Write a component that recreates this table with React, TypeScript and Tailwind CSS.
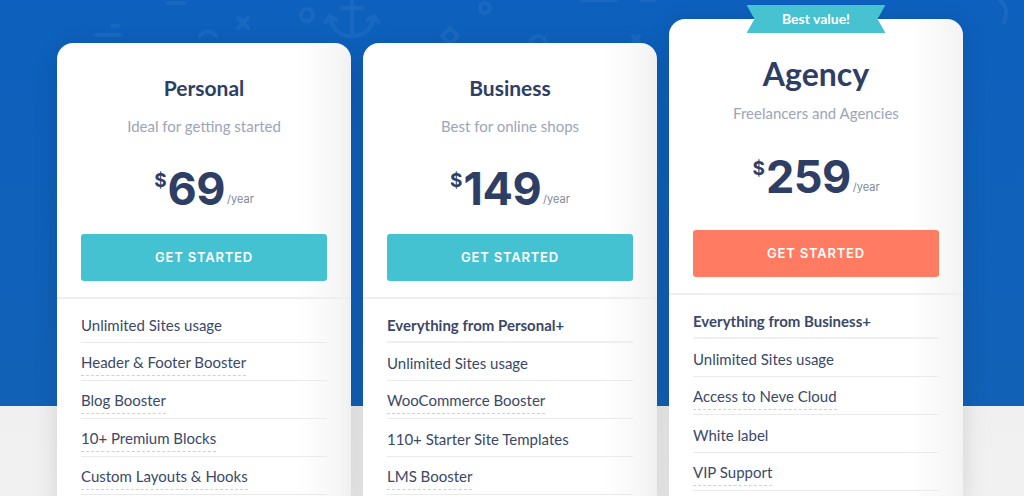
import { ReactNode } from 'react';

type Feature = { label: string; bold?: boolean; dashed?: boolean };

type Plan = {
  name: string;
  tagline: string;
  price: string;
  featured?: boolean;
  features: Feature[];
};

const plans: Plan[] = [
  {
    name: 'Personal',
    tagline: 'Ideal for getting started',
    price: '69',
    features: [
      { label: 'Unlimited Sites usage' },
      { label: 'Header & Footer Booster', dashed: true },
      { label: 'Blog Booster', dashed: true },
      { label: '10+ Premium Blocks', dashed: true },
      { label: 'Custom Layouts & Hooks', dashed: true },
    ],
  },
  {
    name: 'Business',
    tagline: 'Best for online shops',
    price: '149',
    features: [
      { label: 'Everything from Personal+', bold: true },
      { label: 'Unlimited Sites usage' },
      { label: 'WooCommerce Booster', dashed: true },
      { label: '110+ Starter Site Templates' },
      { label: 'LMS Booster', dashed: true },
    ],
  },
  {
    name: 'Agency',
    tagline: 'Freelancers and Agencies',
    price: '259',
    featured: true,
    features: [
      { label: 'Everything from Business+', bold: true },
      { label: 'Unlimited Sites usage' },
      { label: 'Access to Neve Cloud', dashed: true },
      { label: 'White label' },
      { label: 'VIP Support', dashed: true },
    ],
  },
];

// faint doodles sitting in the blue band
const Doodles = () => (
  <svg
    className="absolute left-0 top-0 pointer-events-none"
    width="1024"
    height="60"
    viewBox="0 0 1024 60"
    fill="none"
    stroke="#4a88d4"
    strokeWidth="4"
    strokeLinecap="round"
    opacity="0.2"
  >
    <path d="M112 26h6M95 35h25" />
    <path d="M168 3h16" />
    <circle cx="307" cy="15" r="6" />
    <path d="M238 18l10 10M248 18l-10 10" />
    <path d="M352 -2v38M362 8h-20M350 36c-10 0-18-8-20-18M354 36c10 0 18-8 20-18M326 22l4-6 6 4M378 22l-4-6-6 4" />
    <circle cx="485" cy="8" r="5" />
    <path d="M450 28l8 8-8 8-8-8z" />
    <path d="M530 44a8 8 0 0 1 16 0" />
    <path d="M582 0h34M642 0h12" />
    <path d="M633 36l6 6M639 36l-6 6" />
    <path d="M200 36c4-6 12-6 16 0" />
    <path d="M1000 0c6 6 8 14 4 22" />
  </svg>
);

const Ribbon = () => (
  <div className="absolute left-1/2 top-[-14px] -translate-x-1/2 w-[139px] h-[28px] bg-[#46c2d0] [clip-path:polygon(0_0,100%_0,calc(100%-8px)_50%,100%_100%,0_100%,8px_50%)] flex items-center justify-center">
    <span className="text-white font-bold text-[14px] leading-none font-['Lato',sans-serif]">Best value!</span>
  </div>
);

const FeatureRow = ({ feature }: { feature: Feature }) => {
  let text: ReactNode = feature.label;
  if (feature.dashed) {
    text = <span className="border-b border-dashed border-[#cdd1da] pb-[1px]">{feature.label}</span>;
  }
  return (
    <li
      className={`h-[38px] pt-[4px] flex items-center border-b border-[#e9eaec] text-[15px] text-[#3b4868] ${
        feature.bold ? 'font-bold border-b-2 border-[#efefef]' : ''
      }`}
    >
      {text}
    </li>
  );
};

const PlanCard = ({ plan }: { plan: Plan }) => {
  const f = plan.featured;
  return (
    <div
      className={`relative w-[294px] shrink-0 rounded-[16px] bg-[linear-gradient(90deg,#ffffff_82%,#f3f3f3)] shadow-[0_4px_24px_rgba(0,0,0,0.12)] font-['Lato',sans-serif] ${
        f ? 'mt-[19px]' : 'mt-[43px]'
      }`}
    >
      {f && <Ribbon />}
      <div className={`px-[24px] flex flex-col items-center ${f ? 'pt-[34px]' : 'pt-[31px]'}`}>
        <h3
          className={`font-bold text-[#2f3e64] ${
            f ? 'text-[32px] leading-[42px]' : 'text-[21px] leading-[28px]'
          }`}
        >
          {plan.name}
        </h3>
        <p className={`text-[15px] leading-[20px] text-[#9da5b7] ${f ? 'mt-[8px]' : 'mt-[14px]'}`}>
          {plan.tagline}
        </p>
        <div className={`flex items-start font-['Inter',sans-serif] text-[#2f3e64] ${f ? 'mt-[31px]' : 'mt-[30px]'}`}>
          <span className="text-[19px] font-bold leading-none mt-[5px] mr-[1px]">$</span>
          <span className="text-[45px] font-bold leading-none tracking-[-0.5px]">{plan.price}</span>
          <span className="text-[11px] text-[#7f889b] mt-[28px] ml-[2px] leading-none">/year</span>
        </div>
        <button
          className={`w-full h-[47px] rounded-[3px] text-white text-[13px] font-semibold tracking-[0.8px] font-['Inter',sans-serif] ${
            f ? 'mt-[31px] bg-[#ff7b61]' : 'mt-[23px] bg-[#45c2d1]'
          }`}
        >
          GET STARTED
        </button>
      </div>
      <div className="mt-[16px] h-[2px] bg-[#efefef]" />
      <ul className="px-[24px] pt-[6px] pb-[24px]">
        {plan.features.map((feature) => (
          <FeatureRow key={feature.label} feature={feature} />
        ))}
      </ul>
    </div>
  );
};

export default function App() {
  return (
    <div className="relative h-[496px] w-[1024px] overflow-hidden bg-[linear-gradient(to_bottom,#0d60bd_0,#1161b6_406px,#f0f0f0_406px,#f1f1f1_100%)]">
      <Doodles />
      <div className="relative flex items-start gap-[12px] pl-[57px]">
        {plans.map((plan) => (
          <PlanCard key={plan.name} plan={plan} />
        ))}
      </div>
    </div>
  );
}
